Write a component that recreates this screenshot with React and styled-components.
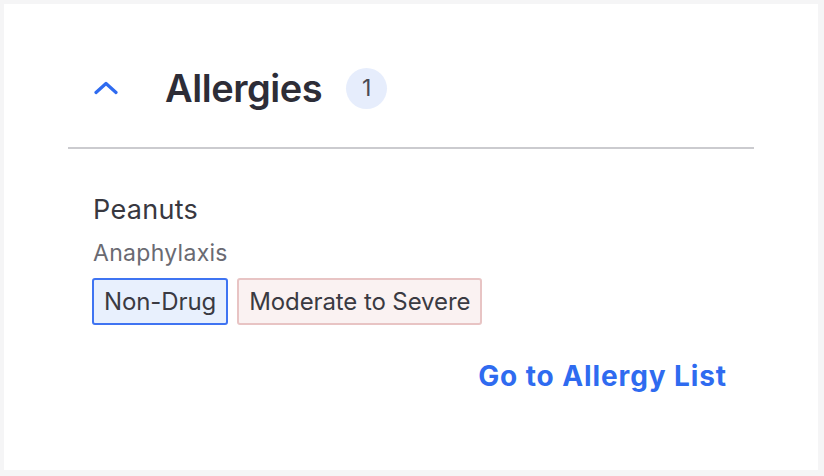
import React from "react";
import styled, { createGlobalStyle } from "styled-components";

const Global = createGlobalStyle`
  html, body { margin: 0; padding: 0; background: #f5f5f6; }
  body { font-family: Inter, "Noto Sans", sans-serif; }
  * { box-sizing: border-box; }
`;

const Page = styled.div`
  width: 824px;
  height: 476px;
  padding: 4px 6px 6px 4px;
`;

const Card = styled.section`
  background: #ffffff;
  height: 100%;
  padding: 0 64px 0 64px;
  display: flex;
  flex-direction: column;
`;

const Header = styled.header`
  display: flex;
  align-items: center;
  height: 145px;
  padding: 25px 0 0 26px;
  border-bottom: 2px solid #cbcbcf;
`;

const Toggle = styled.button`
  border: none;
  background: none;
  padding: 0;
  width: 24px;
  height: 24px;
  display: flex;
  align-items: center;
  justify-content: center;
  margin-right: 47px;
  cursor: pointer;
`;

const Title = styled.h2`
  margin: 0;
  font-size: 38px;
  line-height: 46px;
  letter-spacing: -0.45px;
  font-weight: 600;
  color: #2d2d37;
`;

const Count = styled.span`
  margin-left: 24px;
  width: 41px;
  height: 41px;
  border-radius: 50%;
  background: #e6edfc;
  color: #4a4a52;
  font-size: 23px;
  display: flex;
  align-items: center;
  justify-content: center;
`;

const Body = styled.div`
  padding: 45px 25px 0 25px;
  display: flex;
  flex-direction: column;
`;

const Name = styled.div`
  font-size: 27px;
  line-height: 32px;
  letter-spacing: 0.3px;
  color: #383840;
`;

const Reaction = styled.div`
  margin-top: 13px;
  font-size: 23px;
  line-height: 28px;
  letter-spacing: 0.3px;
  color: #6a6a72;
`;

const Tags = styled.div`
  display: flex;
  gap: 9px;
  margin-top: 11px;
  margin-left: -1px;
`;

const Tag = styled.span`
  height: 47px;
  padding: 0 10px 0 10px;
  display: flex;
  align-items: center;
  font-size: 24px;
  letter-spacing: -0.1px;
  color: #3a3a42;
  border-radius: 3px;
  border: 2px solid ${(p) => (p.$tone === "blue" ? "#3f74f2" : "#e8c4c4")};
  background: ${(p) => (p.$tone === "blue" ? "#e8f0fd" : "#faf2f2")};
`;

const Footer = styled.div`
  display: flex;
  justify-content: flex-end;
  margin-top: 34px;
  padding-right: 2px;
`;

const Link = styled.a`
  font-size: 28px;
  line-height: 34px;
  letter-spacing: 0.9px;
  font-weight: 700;
  color: #2f6bf0;
  text-decoration: none;
  cursor: pointer;
`;

export default function App() {
  return (
    <Page>
      <Global />
      <Card>
        <Header>
          <Toggle aria-label="Collapse">
            <svg width="24" height="14" viewBox="0 0 24 14" fill="none">
              <path d="M2 11.5 L12 2.5 L22 11.5" stroke="#2f6bf0" strokeWidth="3.2" strokeLinecap="round" strokeLinejoin="round" />
            </svg>
          </Toggle>
          <Title>Allergies</Title>
          <Count>1</Count>
        </Header>
        <Body>
          <Name>Peanuts</Name>
          <Reaction>Anaphylaxis</Reaction>
          <Tags>
            <Tag $tone="blue">Non-Drug</Tag>
            <Tag $tone="red">Moderate to Severe</Tag>
          </Tags>
          <Footer>
            <Link>Go to Allergy List</Link>
          </Footer>
        </Body>
      </Card>
    </Page>
  );
}
